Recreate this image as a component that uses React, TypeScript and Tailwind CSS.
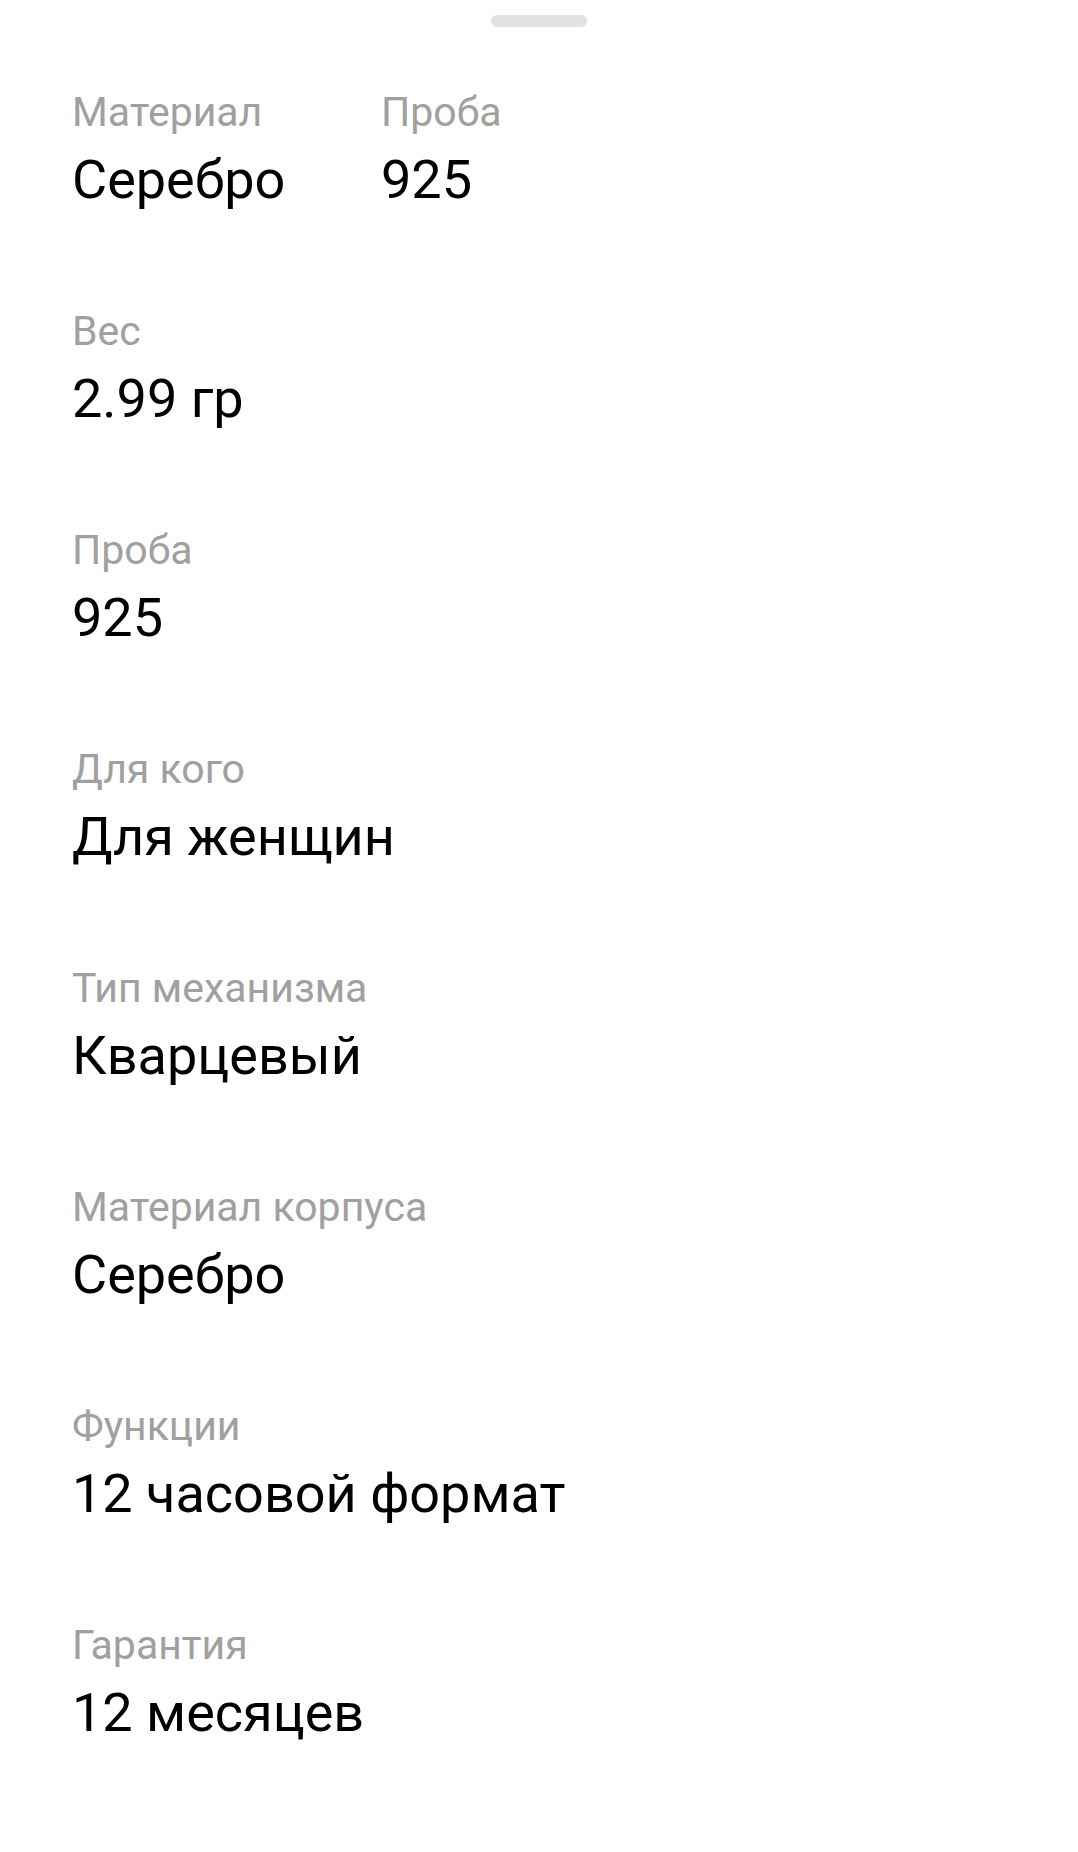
const specs = [
  { label: 'Вес', value: '2.99 гр' },
  { label: 'Проба', value: '925' },
  { label: 'Для кого', value: 'Для женщин' },
  { label: 'Тип механизма', value: 'Кварцевый' },
  { label: 'Материал корпуса', value: 'Серебро' },
  { label: 'Функции', value: '12 часовой формат' },
  { label: 'Гарантия', value: '12 месяцев' },
]

function Spec({ label, value }: { label: string; value: string }) {
  return (
    <div className="flex flex-col gap-[12px]">
      <div className="text-[41px] leading-[48px] text-[#a0a0a0]">{label}</div>
      <div className="text-[54px] leading-[64px] text-black">{value}</div>
    </div>
  )
}

export default function App() {
  return (
    <div className="min-h-[1852px] w-full bg-white pt-[15px] font-['Roboto','Noto_Sans',sans-serif]">
      <div className="mx-auto h-[12px] w-[96px] rounded-full bg-[#e2e2e2]" />

      <div className="mt-[61px] flex flex-col gap-[95px] px-[72px]">
        <div className="flex">
          <div className="w-[309px]">
            <Spec label="Материал" value="Серебро" />
          </div>
          <Spec label="Проба" value="925" />
        </div>
        {specs.map((s) => (
          <Spec key={s.label} label={s.label} value={s.value} />
        ))}
      </div>
    </div>
  )
}
